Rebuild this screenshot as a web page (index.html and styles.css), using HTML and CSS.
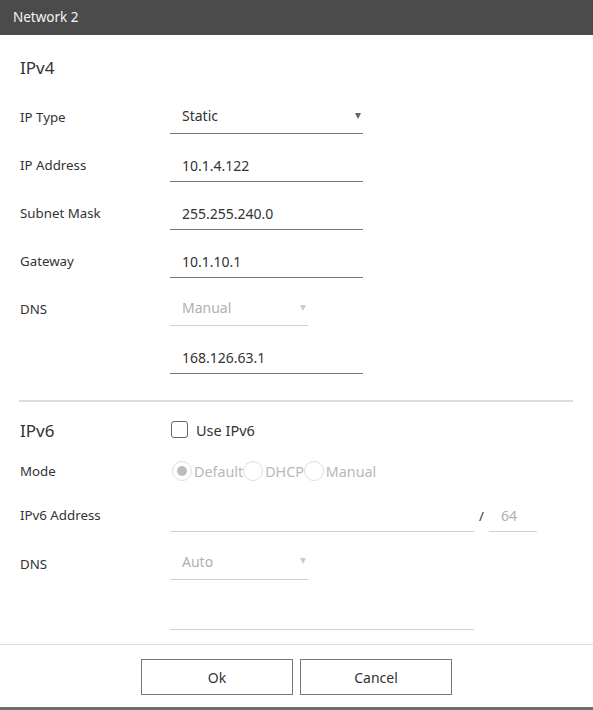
FILE: index.html
```html
<!DOCTYPE html>
<html>
<head>
<meta charset="utf-8">
<link rel="stylesheet" href="styles.css">
</head>
<body>
<div class="dialog">
  <div class="titlebar">Network 2</div>
  <div class="content">
    <h2 class="section-title v4">IPv4</h2>
    <div class="row">
      <div class="label">IP Type</div>
      <div class="field select w193"><span>Static</span><span class="arrow"></span></div>
    </div>
    <div class="row">
      <div class="label">IP Address</div>
      <div class="field w193"><span>10.1.4.122</span></div>
    </div>
    <div class="row">
      <div class="label">Subnet Mask</div>
      <div class="field w193"><span>255.255.240.0</span></div>
    </div>
    <div class="row">
      <div class="label">Gateway</div>
      <div class="field w193"><span>10.1.10.1</span></div>
    </div>
    <div class="row">
      <div class="label">DNS</div>
      <div class="field select disabled w138"><span>Manual</span><span class="arrow"></span></div>
    </div>
    <div class="row">
      <div class="label"></div>
      <div class="field w193"><span>168.126.63.1</span></div>
    </div>
  </div>
  <div class="separator"></div>
  <div class="content">
    <div class="row r-head">
      <h2 class="section-title">IPv6</h2>
      <label class="check"><span class="box"></span><span>Use IPv6</span></label>
    </div>
    <div class="row r-mode">
      <div class="label">Mode</div>
      <div class="radios">
        <span class="radio on"></span><span class="rlabel">Default</span>
        <span class="radio"></span><span class="rlabel">DHCP</span>
        <span class="radio"></span><span class="rlabel">Manual</span>
      </div>
    </div>
    <div class="row r-addr">
      <div class="label">IPv6 Address</div>
      <div class="addr">
        <div class="field disabled w304"></div>
        <span class="slash">/</span>
        <div class="field disabled w48"><span>64</span></div>
      </div>
    </div>
    <div class="row r-dns">
      <div class="label">DNS</div>
      <div class="field select disabled w138"><span>Auto</span><span class="arrow"></span></div>
    </div>
    <div class="row r-empty">
      <div class="label"></div>
      <div class="field disabled w304"></div>
    </div>
  </div>
  <div class="footer">
    <button class="btn">Ok</button>
    <button class="btn">Cancel</button>
  </div>
</div>
</body>
</html>
```
FILE: styles.css
```css
html, body {
  margin: 0;
  padding: 0;
}
body {
  background: #6e6e6e;
  font-family: "Noto Sans", "Open Sans", sans-serif;
  font-size: 13px;
  color: #333;
  width: 593px;
  height: 710px;
  overflow: hidden;
}
.dialog {
  background: #fff;
  height: 707px;
  display: flex;
  flex-direction: column;
}
.titlebar {
  height: 35px;
  line-height: 35px;
  background: #4b4b4b;
  color: #f4f4f4;
  padding-left: 13px;
  font-size: 13.5px;
}
.content {
  padding: 0 20px;
}
.section-title {
  margin: 0;
  font-size: 17px;
  font-weight: normal;
  line-height: 24px;
  color: #333;
}
.section-title.v4 {
  padding-top: 21px;
  margin-bottom: 13px;
}
.row {
  display: grid;
  grid-template-columns: 150px 1fr;
  align-items: center;
  height: 48px;
}
.label {
  line-height: 18px;
  font-size: 13.3px;
}
.field {
  height: 30px;
  border-bottom: 1px solid #777;
  display: flex;
  align-items: center;
  justify-content: space-between;
  padding: 0 12px 3px;
  box-sizing: border-box;
  color: #333;
  margin-top: 4px;
  font-size: 14px;
}
.field.select {
  padding-bottom: 6px;
}
.field.disabled {
  border-bottom-color: #d0d0d0;
  color: #b0b0b0;
}
.w193 { width: 193px; }
.w138 { width: 138px; }
.w304 { width: 304px; }
.w48 { width: 48px; }
.arrow {
  width: 0;
  height: 0;
  border-left: 3.5px solid transparent;
  border-right: 3.5px solid transparent;
  border-top: 6px solid #666;
  margin-right: -10px;
}
.field.disabled .arrow {
  border-top-color: #ccc;
}
.separator {
  height: 2px;
  background: #dcdcdc;
  margin: 19px 20px 0 19px;
}
.r-head {
  height: 40px;
  margin-top: 9px;
}
.check {
  display: flex;
  align-items: center;
  gap: 8px;
  margin-left: 1px;
  font-size: 14.5px;
  margin-top: -3px;
}
.box {
  width: 15px;
  height: 15px;
  border: 1px solid #666;
  border-radius: 3px;
}
.r-mode {
  height: 40px;
}
.radios {
  display: flex;
  align-items: center;
  color: #b8b8b8;
  margin-left: 2px;
  font-size: 14.3px;
}
.radio {
  width: 20px;
  height: 20px;
  border: 1px solid #dedede;
  border-radius: 50%;
  box-sizing: border-box;
  position: relative;
  margin-right: 2px;
}
.radio.on::after {
  content: "";
  position: absolute;
  left: 4px;
  top: 4px;
  width: 10px;
  height: 10px;
  border-radius: 50%;
  background: #bdbdbd;
}
.r-addr {
  height: 48px;
}
.addr {
  display: flex;
  align-items: center;
}
.slash {
  width: 15px;
  text-align: center;
  color: #333;
  margin-top: 2px;
}
.r-dns {
  height: 49px;
}
.r-dns .field {
  margin-top: 2px;
}
.r-empty {
  height: 50px;
}
.footer {
  margin-top: auto;
  border-top: 1px solid #dcdcdc;
  height: 63px;
  display: flex;
  justify-content: center;
  align-items: flex-start;
  gap: 7px;
  padding-top: 14px;
  box-sizing: border-box;
}
.btn {
  width: 152px;
  height: 36px;
  background: #fff;
  border: 1px solid #777;
  font-family: inherit;
  font-size: 14px;
  color: #333;
  padding: 0;
}
```
